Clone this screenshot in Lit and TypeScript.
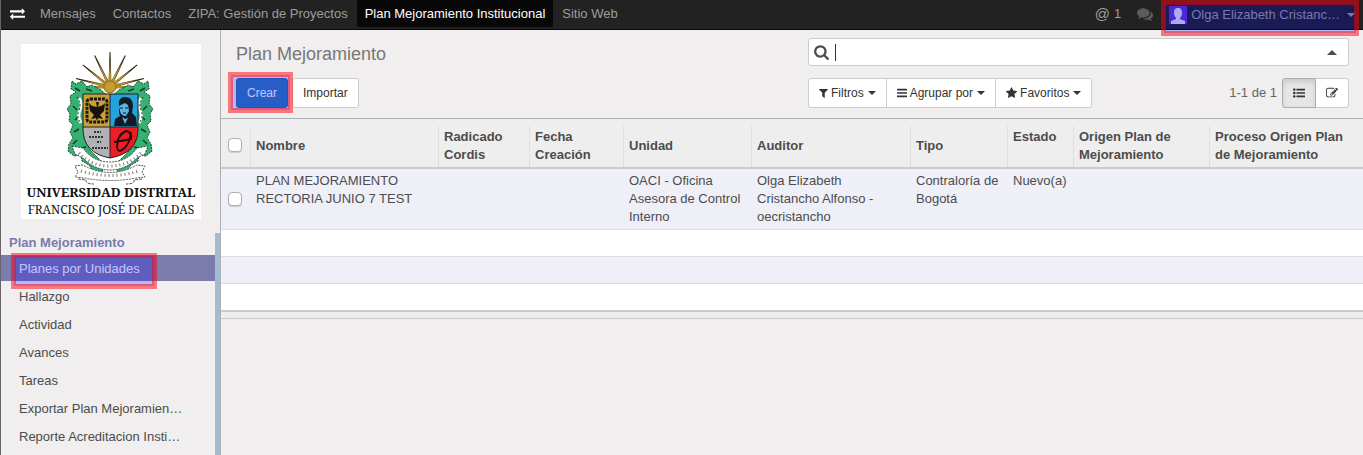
import { LitElement, html, css, svg } from "lit";
import { customElement, state } from "lit/decorators.js";

const ICONS = {
  exchange: { w: 1792, d: "M1792 1184v192q0 13-9.500 22.500t-22.500 9.500h-1376v192q0 13-9.500 22.500t-22.500 9.500q-12 0-24-10l-319-320q-9-9-9-22 0-14 9-23l320-320q9-9 23-9 13 0 22.500 9.500t9.500 22.500v192h1376q13 0 22.500 9.500t9.500 22.500zM1792 640q0 14-9 23l-320 320q-9 9-23 9-13 0-22.500-9.500t-9.500-22.500v-192h-1376q-13 0-22.500-9.500t-9.500-22.500v-192q0-13 9.500-22.500t22.500-9.500h1376v-192q0-14 9-23t23-9q12 0 24 10l319 319q9 9 9 23z" },
  comments: { w: 1792, d: "M1408 768q0 139-94 257t-256.500 186.500-353.500 68.500q-86 0-176-16-124 88-278 128-36 9-86 16h-3q-11 0-20.500-8t-11.500-21q-1-3-1-6.500t.5-6.500 2-6l2.500-5 3.500-5.500 4-5 4.500-5 4-4.500q5-6 23-25t26-29.500 22.500-29 25-38.500 20.500-44q-124-72-195-177t-71-224q0-139 94-257t256.500-186.500 353.500-68.500 353.500 68.500 256.500 186.500 94 257zM1792 1024q0 120-71 224.500t-195 176.500q10 24 20.500 44t25 38.500 22.500 29 26 29.500 23 25q1 1 4 4.500t4.500 5 4 5 3.500 5.500l2.500 5 2 6 .5 6.500-1 6.500q-3 14-13 22t-22 7q-50-7-86-16-154-40-278-128-90 16-176 16-271 0-472-132 58 4 88 4 161 0 309-45t264-129q125-92 192-212t67-254q0-77-23-152 129 71 204 178t75 230z" },
  search: { w: 1664, d: "M1152 832q0-185-131.500-316.500t-316.500-131.500-316.500 131.500-131.500 316.500 131.500 316.500 316.500 131.500 316.500-131.500 131.500-316.500zM1664 1664q0 52-38 90t-90 38q-54 0-90-38l-343-342q-179 124-399 124-143 0-273.500-55.500t-225-150-150-225-55.500-273.500 55.500-273.500 150-225 225-150 273.500-55.500 273.500 55.500 225 150 150 225 55.500 273.500q0 220-124 399l343 343q37 37 37 90z" },
  filter: { w: 1408, d: "M1403 295q17 41-14 70l-493 493v742q0 42-39 59-13 5-25 5-27 0-45-19l-256-256q-19-19-19-45v-486l-493-493q-31-29-14-70 17-39 59-39h1280q42 0 59 39z" },
  bars: { w: 1536, d: "M1536 1344v128q0 26-19 45t-45 19h-1408q-26 0-45-19t-19-45v-128q0-26 19-45t45-19h1408q26 0 45 19t19 45zM1536 832v128q0 26-19 45t-45 19h-1408q-26 0-45-19t-19-45v-128q0-26 19-45t45-19h1408q26 0 45 19t19 45zM1536 320v128q0 26-19 45t-45 19h-1408q-26 0-45-19t-19-45v-128q0-26 19-45t45-19h1408q26 0 45 19t19 45z" },
  star: { w: 1664, d: "M1664 647q0 22-26 48l-363 354 86 500q1 7 1 20 0 21-10.500 35.500t-30.500 14.500q-19 0-40-12l-449-236-449 236q-22 12-40 12-21 0-31.500-14.500t-10.500-35.500q0-6 2-20l86-500-364-354q-25-27-25-48 0-37 56-46l502-73 225-455q19-41 49-41t49 41l225 455 502 73q56 9 56 46z" },
  list: { w: 1792, d: "M384 1408q0 80-56 136t-136 56-136-56-56-136 56-136 136-56 136 56 56 136zM384 896q0 80-56 136t-136 56-136-56-56-136 56-136 136-56 136 56 56 136zM1792 1312v192q0 13-9.500 22.500t-22.500 9.500h-1216q-13 0-22.500-9.500t-9.500-22.500v-192q0-13 9.500-22.500t22.500-9.500h1216q13 0 22.500 9.500t9.500 22.500zM384 384q0 80-56 136t-136 56-136-56-56-136 56-136 136-56 136 56 56 136zM1792 800v192q0 13-9.500 22.500t-22.500 9.500h-1216q-13 0-22.500-9.500t-9.500-22.500v-192q0-13 9.500-22.500t22.500-9.500h1216q13 0 22.500 9.500t9.500 22.500zM1792 288v192q0 13-9.500 22.500t-22.500 9.500h-1216q-13 0-22.500-9.500t-9.500-22.500v-192q0-13 9.500-22.500t22.500-9.500h1216q13 0 22.500 9.500t9.500 22.500z" },
  edit: { w: 1792, d: "M888 1184l116-116-152-152-116 116v56h96v96h56zM1328 464q-16-16-33 1l-350 350q-17 17-1 33t33-1l350-350q17-17 1-33zM1408 1058v190q0 119-84.500 203.500t-203.500 84.500h-832q-119 0-203.500-84.500t-84.500-203.500v-832q0-119 84.500-203.500t203.500-84.500h832q63 0 117 25 15 7 18 23 3 17-9 29l-49 49q-14 14-32 8-23-6-45-6h-832q-66 0-113 47t-47 113v832q0 66 47 113t113 47h832q66 0 113-47t47-113v-126q0-13 9-22l64-64q15-15 35-7t20 29zM1312 320l288 288-672 672h-288v-288zM1756 452l-92 92-288-288 92-92q28-28 68-28t68 28l152 152q28 28 28 68t-28 68z" },
};

const icon = (name: keyof typeof ICONS, size: number) => {
  const { w, d } = ICONS[name];
  return html`<svg class="icon" viewBox="0 0 ${w} 1792" width=${Math.round((w / 1792) * size)} height=${size} aria-hidden="true"><path d=${d} /></svg>`;
};

const COLUMNS = [
  { label: "Nombre", width: "188px" },
  { label: "Radicado Cordis", width: "91px" },
  { label: "Fecha Creación", width: "94px" },
  { label: "Unidad", width: "128px" },
  { label: "Auditor", width: "159px" },
  { label: "Tipo", width: "97px" },
  { label: "Estado", width: "66px", top: true },
  { label: "Origen Plan de Mejoramiento", width: "136px" },
  { label: "Proceso Origen Plan de Mejoramiento", width: "auto" },
];

const ROWS = [
  ["PLAN MEJORAMIENTO RECTORIA JUNIO 7 TEST", "", "", "OACI - Oficina Asesora de Control Interno", "Olga Elizabeth Cristancho Alfonso - oecristancho", "Contraloría de Bogotá", "Nuevo(a)", "", ""],
];

// Sun rays: a gold wedge at the base, with a thin dark tip.
const rays = [0, 14, 39, 64, 90, 116, 141, 166, 180].map((deg) => {
  const a = (Math.PI * deg) / 180;
  const c = Math.cos(a), s = Math.sin(a);
  const at = (r: number, side: number) => `${89 - c * r - s * side},${43 - s * r + c * side}`;
  return svg`<path fill="#2a2210" d="M${at(6, 1.3)}L${at(35, 0.5)}L${at(35, -0.5)}L${at(6, -1.3)}Z"/><path fill="#b5912f" d="M${at(6, 1.6)}L${at(27, 0)}L${at(6, -1.2)}Z"/>`;
});

@customElement("university-crest")
export class UniversityCrest extends LitElement {
  static styles = css`
    :host { display: block; }
    svg { display: block; width: 100%; height: auto; }
    .name { font-family: "Noto Serif", "Liberation Serif", serif; fill: #111; }
  `;
  render() {
    return html`<svg viewBox="0 0 180 175" role="img" aria-label="Universidad Distrital Francisco José de Caldas">
      <rect width="180" height="175" fill="#fff" />
      ${rays}
      <g fill="#35b273" stroke="#17462c" stroke-width="1" stroke-dasharray="2 1">
        <path d="M80 46l-9-5-5 2-5-6-6 3-4-3-1 8 5 3-6 4 1 8-4 5 3 5-1 7 4 4-3 7 3 6-4 6-1 7 6 5 7-1 1 6 7 4 5 7 8 1 2-9-14-14-5-12-1-38 25-3z" />
        <path d="M98 46l9-5 5 2 5-6 6 3 4-3 1 8-5 3 6 4-1 8 4 5-3 5 1 7-4 4 3 7-3 6 4 6 1 7-6 5-7-1-1 6-7 4-5 7-8 1-2-9 14-14 5-12 1-38-25-3z" />
      </g>
      <path d="M54 44l5 3M65 45l6 2M52 62l4 4M58 72l-4 4M53 88l5-3M56 96l-4 4M60 104l5-1M124 44l-5 3M113 45l-6 2M126 62l-4 4M120 72l4 4M125 88l-5-3M122 96l4 4M118 104l-5-1" stroke="#123d25" stroke-width="1.500" fill="none" />
      <g fill="none" stroke="#fff" stroke-width="3"><path d="M58 54q4 6 1 12t1 13M120 54q-4 6-1 12t-1 13" /></g>
      <g fill="none" stroke="#222" stroke-width="1"><path d="M56 53q5 6 2 13t2 13M122 53q-5 6-2 13t-2 13" stroke-dasharray="2 2" /></g>
      <circle cx="89" cy="43" r="6" fill="#c79c2b" stroke="#8d6c1c" stroke-width="1" />
      <path d="M62 50h27v33H62z" fill="#c9a13b" />
      <path d="M89 50h28v33H89z" fill="#22a3dd" />
      <path d="M62 83h27v31q-25-4-27-27z" fill="#b2b1b6" />
      <path d="M89 83h28v4q-1 23-28 27z" fill="#ee1c25" />
      <path d="M62 50h55v35q0 24-28 29-27-5-27-29zM89 50v64M62 83h55" fill="none" stroke="#222" />
      <rect x="66" y="55" width="20" height="23" rx="3" fill="#c9a13b" stroke="#1b1710" stroke-width="3" stroke-dasharray="3 1" />
      <path d="M75 58h3l-1 5 5-2 2-2-1 8-4 4 3 4-5-1-1 3-1-3-5 1 3-4-4-4-1-8 3 3 5 1z" fill="#17130c" />
      <path d="M98 61q-1-8 6-8 8 0 8 9l-1 7 4 4 1 9H93l1-7 5-3-1-3z" fill="#151a26" />
      <path d="M98 62l6-3 3 2 1 6-3 5q-5 0-6-5z" fill="#5cb6e2" />
      <path d="M99 64h3M104 64h3M102 69h3" stroke="#151a26" fill="none" />
      <path d="M101 73l3 7 3-6-3 1z" fill="#5cb6e2" />
      <g fill="none" stroke="#333" stroke-width="2"><path d="M73 88h7M68 93h15M76 98h4M71 104h16" stroke-dasharray="2 1" /></g>
      <path d="M93 98q8-1 17-3 1-7-5-8-9 4-9 16 1 6 5 3 8-5 9-18" fill="none" stroke="#2b0a0c" stroke-width="2" />
      <path d="M51 102l11 2q10 14 27 14t27-14l11-2-3 8-8 4q-11 12-27 12t-27-12l-8-4z" fill="#fff" stroke="#444" stroke-width="1" stroke-dasharray="2 1" />
      <path d="M58 109q12 13 31 13t31-13" fill="none" stroke="#777" stroke-width="3" stroke-dasharray="1 3" />
      <path d="M54 122l8-1q27 15 54 0l8 1-3 6 3 5-9 1q-26 5-52 0l-9-1 3-5z" fill="#fff" stroke="#555" stroke-width="1" stroke-dasharray="2 1" />
      <path d="M60 127q29 9 58 0" fill="none" stroke="#777" stroke-width="3" stroke-dasharray="1 3" />
      <path d="M57 135l8 1q-1 4 8 4M121 135l-8 1q1 4-8 4" fill="none" stroke="#555" stroke-dasharray="3 1" />
      <text class="name" x="90" y="153" font-size="13" font-weight="700" text-anchor="middle">UNIVERSIDAD DISTRITAL</text>
      <text class="name" x="90" y="170" font-size="12" text-anchor="middle">FRANCISCO JOSÉ DE CALDAS</text>
    </svg>`;
  }
}

@customElement("app-root")
export class AppRoot extends LitElement {
  @state() private section = "Planes por Unidades";

  static styles = css`
    :host { display: flex; flex-direction: column; min-height: 100vh; box-sizing: border-box; border-left: 1px solid #666; background: #f0eeee; color: #4c4c4c; font: 13px/18px "Liberation Sans", Arial, sans-serif; }
    * { box-sizing: border-box; }
    a { color: inherit; text-decoration: none; }
    button { font: inherit; color: #333; margin: 0; cursor: pointer; }
    .icon { display: block; fill: currentColor; flex: none; }
    .caret { border: 4px solid transparent; border-top-color: currentColor; border-bottom: 0; flex: none; }
    .caret.up { border-top: 0; border-bottom: 5px solid currentColor; border-left-width: 5px; border-right-width: 5px; }

    .nav { display: flex; align-items: flex-start; gap: 1px; height: 30px; background: #222; border-bottom: 1px solid #080808; color: #9d9d9d; }
    .nav a { display: flex; align-items: center; height: 27px; padding: 0 8px; }
    .nav .apps { color: #fff; padding: 0 6px 0 9px; }
    .nav .current { background: #080808; color: #fff; }
    .tools { display: flex; margin-left: auto; padding-right: 8px; }
    .nav .mention { gap: 4px; }
    .at { font-size: 15px; }
    .nav .chat { color: #5c5c5c; }
    .user { position: relative; display: flex; align-items: center; gap: 4px; height: 30px; margin-left: 8px; padding: 0; border: 0; background: none; color: #9d9d9d; }
    .user .caret { margin-left: 3px; }
    .avatar { display: block; }

    .marked { position: relative; }
    .marked::after { content: ""; position: absolute; inset: var(--mark-inset); background: rgba(0, 0, 255, 0.23); border: 2px solid rgba(255, 0, 14, 0.5); box-shadow: 0 0 0 3px rgba(255, 0, 14, 0.5); pointer-events: none; z-index: 1; }
    .user.marked { --mark-inset: 3px -1px -3px -5px; }
    .create.marked { --mark-inset: -4px -3px -3px -6px; }
    .mark-text.marked { --mark-inset: -5px -14px -10px -5px; }

    .body { display: flex; flex: 1; }
    .side { display: flex; flex-direction: column; width: 220px; flex: none; border-right: 1px solid #afafb6; }
    .crest { padding: 14px 19px 0 20px; }
    .menu { flex: 1; margin-top: 14px; border-right: 5px solid #a2bcd5; }
    .menu h2 { margin: 0; padding: 1px 8px 3px; font-size: 13px; line-height: 18px; color: #7c7bad; }
    .menu ul { list-style: none; margin: 0; padding: 0; }
    .menu li { height: 28px; }
    .menu li a { display: block; height: 26px; padding: 1px 18px 0; line-height: 26px; }
    .menu .on { background: #7c7bad; color: #fff; }

    .main { flex: 1; min-width: 0; }
    .panel { display: grid; grid-template-columns: 1fr 541px; gap: 8px 16px; padding: 8px 14px 10px 15px; border-bottom: 1px solid #afafb6; }
    h1 { margin: 0; font-weight: 400; font-size: 18px; line-height: 32px; color: #777; }
    .search { display: flex; align-items: center; gap: 6px; height: 28px; padding: 0 11px 0 5px; border: 1px solid #ccc; border-radius: 3px; background: #fff; }
    .search input { flex: 1; min-width: 0; border: 0; outline: 0; padding: 0; background: none; font: inherit; color: inherit; caret-color: transparent; }
    .cursor { width: 1px; height: 17px; background: #333; }
    .buttons, .options, .group, .pager { display: flex; align-items: center; }
    .buttons { gap: 4px; }
    .btn { display: flex; align-items: center; gap: 3px; height: 30px; padding: 0 10px; border: 1px solid #ccc; border-radius: 3px; background: #fff; font-size: 12px; }
    .btn .caret { margin-left: 1px; }
    .create { background: #337ab7; border-color: #2e6da4; color: #fff; }
    .group .btn { border-radius: 0; margin-left: -1px; }
    .group .btn:first-child { border-radius: 3px 0 0 3px; margin-left: 0; }
    .group .btn:last-child { border-radius: 0 3px 3px 0; }
    .options { justify-content: space-between; }
    .pager { gap: 5px; color: #666; }
    .group .active { background: #e6e6e6; border-color: #adadad; box-shadow: inset 0 3px 5px rgba(0, 0, 0, 0.125); z-index: 1; }

    table { width: 100%; table-layout: fixed; border-collapse: collapse; border-bottom: 2px solid #cacaca; background: #fff; }
    .check-col { width: 29px; }
    thead { background: #eee; border-bottom: 2px solid #cacaca; }
    th { height: 49px; padding: 9px 6px 3px; text-align: left; vertical-align: middle; font-weight: 700; }
    th.top { vertical-align: top; }
    th + th { background: linear-gradient(#dfdfdf, #dfdfdf) 0 7px / 1px 100% no-repeat; }
    td { padding: 3px 6px; vertical-align: top; height: 27px; border-top: 1px solid #ddd; }
    .check { padding: 0 1px 0 0; vertical-align: middle; }
    th.check { padding-top: 4px; }
    tbody tr:nth-child(odd) { background: linear-gradient(#f0f0fa, #eeeef6); }
    .check input { appearance: none; display: block; width: 14px; height: 14px; margin: 0 auto; border: 1px solid #b0b0b0; border-radius: 4px; background: #fff; box-shadow: 0 1px 1px rgba(0, 0, 0, 0.15); }
    .foot { height: 7px; border-bottom: 1px solid #c8c8c8; background: #eee; }
  `;

  render() {
    return html`
      <nav class="nav">
        <a class="apps" href="#" aria-label="Aplicaciones">${icon("exchange", 15)}</a>
        <a href="#">Mensajes</a>
        <a href="#">Contactos</a>
        <a href="#">ZIPA: Gestión de Proyectos</a>
        <a class="current" href="#" aria-current="page">Plan Mejoramiento Institucional</a>
        <a href="#">Sitio Web</a>
        <div class="tools">
          <a class="mention" href="#"><span class="at">@</span>1</a>
          <a class="chat" href="#" aria-label="Conversaciones">${icon("comments", 16)}</a>
          <button class="user marked">
            <svg class="avatar" width="18" height="18" viewBox="0 0 18 18" aria-hidden="true">
              <rect width="18" height="18" fill="#6633cc" />
              <path d="M9 2c3 0 4 2 4 5 0 2-1 4-2 5v1l5 2v3H2v-3l5-2v-1C6 11 5 9 5 7c0-3 1-5 4-5z" fill="#dfe0f0" />
            </svg>
            <span>Olga Elizabeth Cristanc…</span><span class="caret"></span>
          </button>
        </div>
      </nav>
      <div class="body">
        <aside class="side">
          <university-crest class="crest"></university-crest>
          <div class="menu">
            <h2>Plan Mejoramiento</h2>
            <ul>
              ${["Planes por Unidades", "Hallazgo", "Actividad", "Avances", "Tareas", "Exportar Plan Mejoramien…", "Reporte Acreditacion Insti…"].map(
                (t) => html`<li><a href="#" class=${t === this.section ? "on" : ""} @click=${() => (this.section = t)}><span class=${t === this.section ? "mark-text marked" : ""}>${t}</span></a></li>`
              )}
            </ul>
          </div>
        </aside>
        <main class="main">
          <header class="panel">
            <h1>Plan Mejoramiento</h1>
            <label class="search">${icon("search", 16)}<span class="cursor"></span><input type="text" aria-label="Buscar" /><span class="caret up"></span></label>
            <div class="buttons"><button class="btn create marked">Crear</button><button class="btn">Importar</button></div>
            <div class="options">
              <div class="group">
                <button class="btn">${icon("filter", 12)}Filtros<span class="caret"></span></button>
                <button class="btn">${icon("bars", 12)}Agrupar por<span class="caret"></span></button>
                <button class="btn">${icon("star", 12)}Favoritos<span class="caret"></span></button>
              </div>
              <div class="pager">
                <span>1-1 de 1</span>
                <div class="group">
                  <button class="btn active" aria-label="Lista">${icon("list", 12)}</button>
                  <button class="btn" aria-label="Formulario">${icon("edit", 12)}</button>
                </div>
              </div>
            </div>
          </header>
          <table>
            <colgroup><col class="check-col" />${COLUMNS.map((c) => html`<col style="width:${c.width}" />`)}</colgroup>
            <thead>
              <tr><th class="check"><input type="checkbox" aria-label="Seleccionar todo" /></th>${COLUMNS.map((c) => html`<th class=${c.top ? "top" : ""}>${c.label}</th>`)}</tr>
            </thead>
            <tbody>
              ${ROWS.map((r) => html`<tr><td class="check"><input type="checkbox" aria-label=${r[0]} /></td>${r.map((c) => html`<td>${c}</td>`)}</tr>`)}
              ${[1, 2, 3].map(() => html`<tr><td colspan="10"></td></tr>`)}
            </tbody>
          </table>
          <div class="foot"></div>
        </main>
      </div>`;
  }
}
